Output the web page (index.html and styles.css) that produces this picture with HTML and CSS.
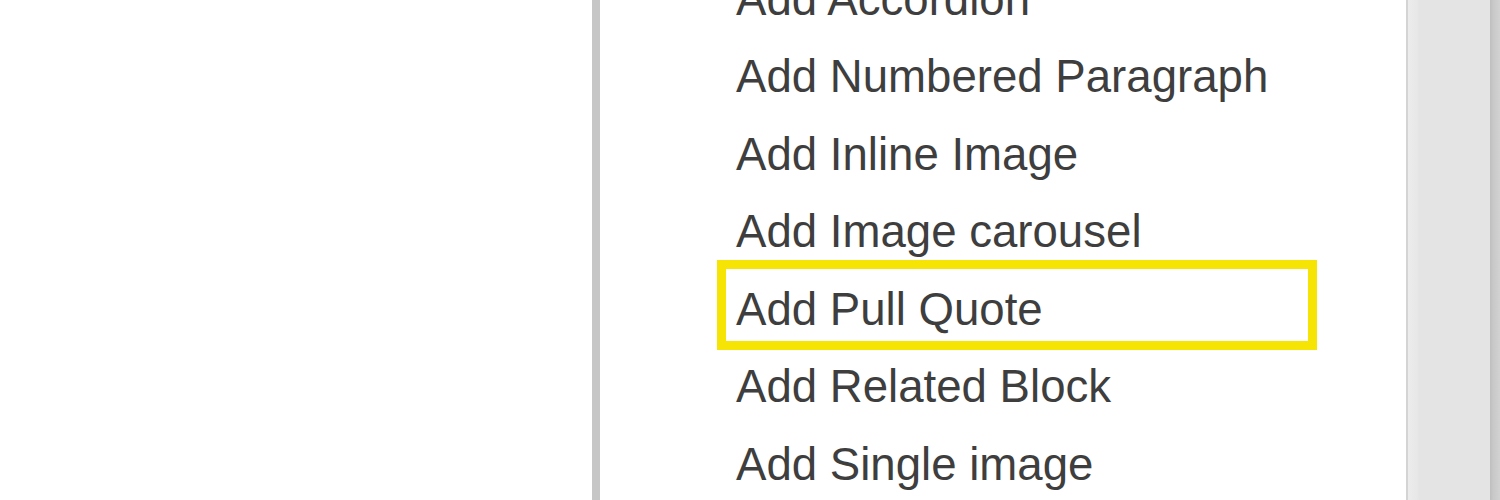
FILE: index.html
```html
<!DOCTYPE html>
<html lang="en">
<head>
  <meta charset="UTF-8">
  <meta name="viewport" content="width=device-width, initial-scale=1.0">
  <title>Add component</title>
  <link rel="stylesheet" href="styles.css">
</head>
<body>
<div class="page">
  <div class="panel">
    <ul class="add-menu">
      <li class="add-item">Add Accordion</li>
      <li class="add-item">Add Numbered Paragraph</li>
      <li class="add-item">Add Inline Image</li>
      <li class="add-item">Add Image carousel</li>
      <li class="add-item is-highlighted">Add Pull Quote</li>
      <li class="add-item">Add Related Block</li>
      <li class="add-item">Add Single image</li>
      <li class="add-item">Add Text</li>
    </ul>
    <div class="scroll-track"></div>
  </div>
</div>
</body>
</html>
```

FILE: styles.css
```css
*, *::before, *::after {
  margin: 0;
  padding: 0;
  box-sizing: border-box;
}

html, body {
  width: 1500px;
  height: 500px;
  overflow: hidden;
  background: #fff;
}

body {
  font-family: 'Liberation Sans', Arial, Helvetica, sans-serif;
  color: #3e3e3e;
}

.page {
  display: flex;
  height: 500px;
  padding-left: 592px;
}

/* dropdown panel, scrolled partway down */
.panel {
  flex: 1;
  display: flex;
  border-left: 8px solid #c6c6c6;
  box-shadow: inset 1px 0 0 #b4b4b4;
  overflow: hidden;
}

.add-menu {
  flex: 1;
  list-style: none;
  margin-top: -39.5px;
  padding-left: 136px;
  background: #fff;
}

.add-item {
  position: relative;
  font-size: 45.6px;
  line-height: 77.5px;
  white-space: nowrap;
}

/* yellow call-out frame round the selected entry */
.add-item.is-highlighted::after {
  content: '';
  position: absolute;
  left: -19px;
  top: -10.5px;
  width: 600px;
  height: 90px;
  border: 9px solid #f6e504;
}

.scroll-track {
  width: 94px;
  background: linear-gradient(90deg, #d4d4d4 0, #d4d4d4 2px, #ececec 2px, #e8e8e8 10px, #e4e4e4 14px, #e4e4e4 84px, #bebebe 84px, #c8c8c8 87px, #d2d2d2 94px);
}
```
